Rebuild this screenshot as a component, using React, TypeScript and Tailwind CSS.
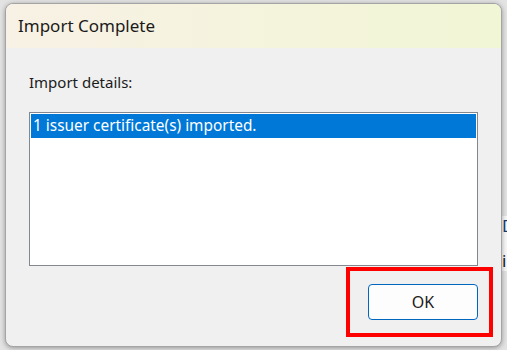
import React from "react";

const font = { fontFamily: '"Noto Sans", "Open Sans", sans-serif' };

const ListBox = () => {
  return (
    <div className="h-[154px] w-full border border-[#828790] bg-white p-px">
      <div className="flex h-[24px] items-center bg-[#0078d7] pl-[2px] text-[15.4px] text-white">
        1 issuer certificate(s) imported.
      </div>
    </div>
  );
};

export default function App() {
  return (
    <div
      className="relative h-[350px] w-[507px] overflow-hidden bg-[#e3e3e3]"
      style={font}
    >
      {/* window behind, peeking out on the right */}
      <div className="absolute left-[495px] top-[216px] flex w-[40px] flex-col gap-[15px] bg-[#f7f7f7] pl-[7px] text-[17px] leading-[20px]">
        <span className="text-[#1a3a6b]">D</span>
        <span className="text-[#222]">i</span>
      </div>

      <div className="absolute left-[5px] top-[3px] flex h-[344px] w-[497px] flex-col overflow-hidden rounded-[8px] border border-[#a4a4a4] bg-[#f0f0f0] shadow-[0_1px_5px_rgba(0,0,0,0.35)]">
        <div className="flex h-[44px] shrink-0 items-center bg-gradient-to-r from-[#f8f1e5] to-[#f1f6d5] pl-[12px] text-[17px] text-[#1b1b1b]">
          Import Complete
        </div>

        <div className="flex flex-1 flex-col pl-[23px] pr-[23px] pt-[24px]">
          <div className="text-[15px] leading-[21px] text-[#1b1b1b]">
            Import details:
          </div>
          <div className="mt-[19px]">
            <ListBox />
          </div>
          <div className="mt-[18px] flex justify-end">
            <button className="h-[36px] w-[110px] rounded-[4px] border border-[#0067c0] bg-[#fdfdfd] text-[16px] text-[#1b1b1b]">
              OK
            </button>
          </div>
        </div>
      </div>

      {/* red highlight annotation */}
      <div className="absolute left-[346px] top-[267px] h-[70px] w-[147px] border-[4px] border-[#ff0000]" />
    </div>
  );
}
